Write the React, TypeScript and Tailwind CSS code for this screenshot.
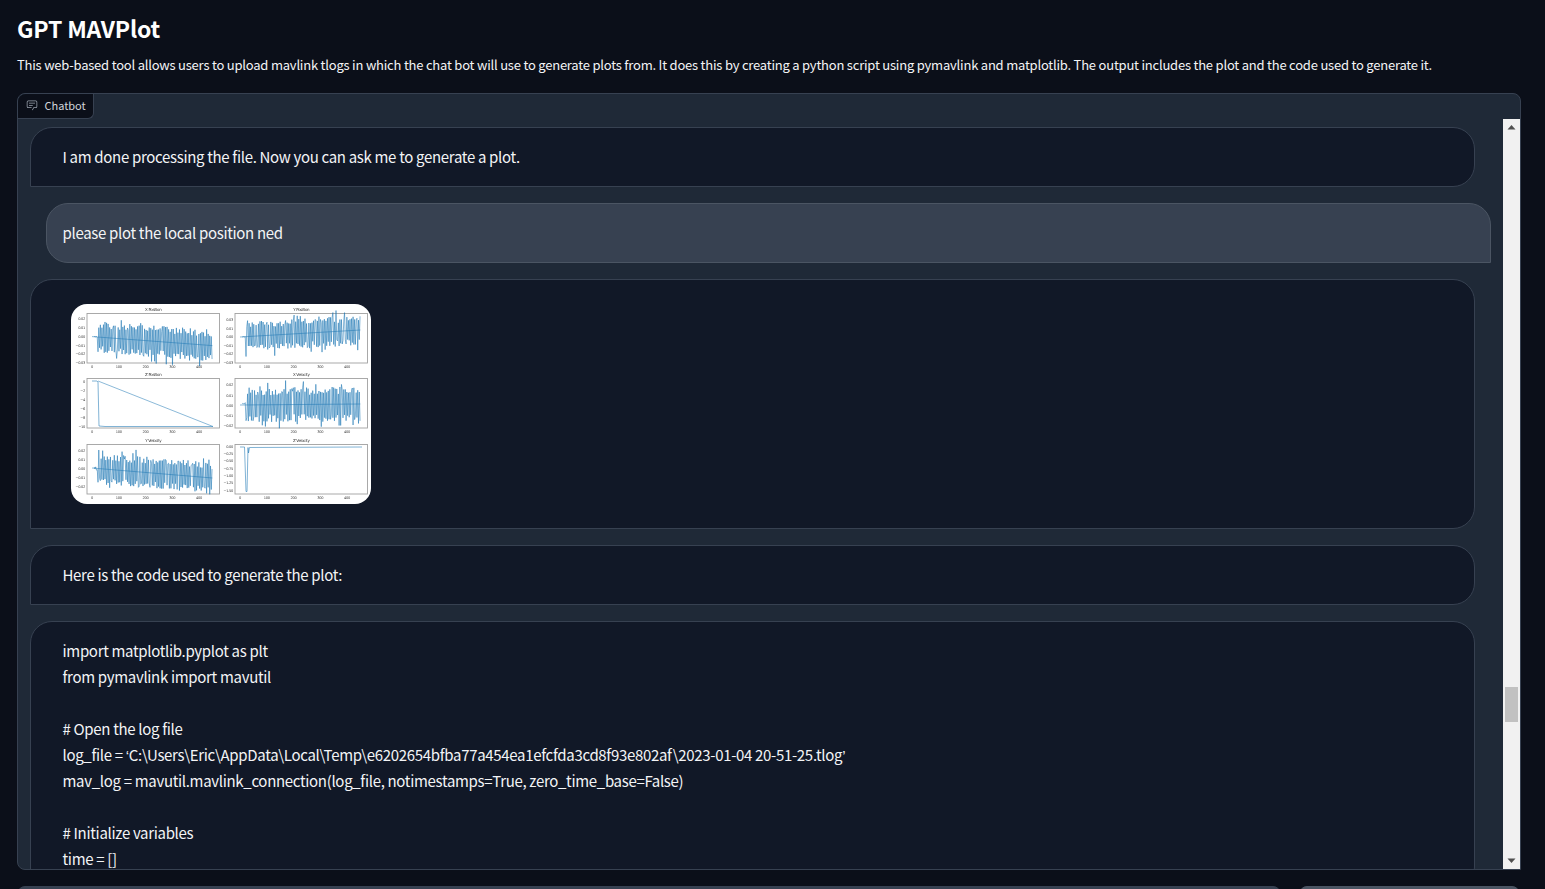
import React from "react";

function rng(seed: number) {
  let s = seed;
  return () => {
    s = (s * 1664525 + 1013904223) % 4294967296;
    return s / 4294967296;
  };
}

const BLUE = "#1f77b4";

type Plot = {
  title: string;
  x: number;
  y: number;
  ticks: { label: string; y: number }[];
  line: string[];
};

function noisy(seed: number, ax: number, zeroY: number, perUnit: number, amp: number, drift: number, startNoise: number) {
  const r = rng(seed);
  const x0 = ax + 5;
  const scale = 0.2675;
  const pts: string[] = [];
  let sign = 1;
  for (let t = 8; t <= 450; t += 2.9) {
    const px = x0 + t * scale;
    const trend = zeroY + (drift * t) / 450;
    let d = 0;
    if (t < 20) d = startNoise * (r() - 0.5);
    else {
      const m = 0.55 + r() * 0.45 + (r() > 0.88 ? 0.4 : 0);
      d = sign * amp * m * perUnit;
      sign = r() > 0.08 ? -sign : sign;
    }
    pts.push(`${px.toFixed(2)},${(trend + d).toFixed(2)}`);
  }
  return pts.join(" ");
}

function trendLine(ax: number, zeroY: number, drift: number) {
  return `${ax + 5},${zeroY} ${ax + 5 + 450 * 0.2675},${zeroY + drift}`;
}

const W = 132.5;
const H = 49.5;

const plots: Plot[] = [
  {
    title: "X Position",
    x: 16,
    y: 9.5,
    ticks: [
      { label: "0.02", y: 15 },
      { label: "0.01", y: 24 },
      { label: "0.00", y: 33 },
      { label: "−0.01", y: 41.5 },
      { label: "−0.02", y: 50 },
      { label: "−0.03", y: 59 },
    ],
    line: [noisy(11, 16, 32.6, 8.8, 1.8, 9, 1), trendLine(16, 32.6, 9)],
  },
  {
    title: "Y Position",
    x: 164,
    y: 9.5,
    ticks: [
      { label: "0.03", y: 16 },
      { label: "0.01", y: 24.5 },
      { label: "0.00", y: 33 },
      { label: "−0.01", y: 41.5 },
      { label: "−0.02", y: 50 },
      { label: "−0.03", y: 58.5 },
    ],
    line: [noisy(27, 164, 33, 8.4, 1.8, -7, 1), trendLine(164, 33, -7)],
  },
  {
    title: "Z Position",
    x: 16,
    y: 74.5,
    ticks: [
      { label: "0", y: 77.5 },
      { label: "−2", y: 87 },
      { label: "−4", y: 95.5 },
      { label: "−6", y: 105 },
      { label: "−8", y: 113.5 },
      { label: "−10", y: 122.5 },
    ],
    line: ["21,77 26,77 27,78 28,122 34,122.5 142,122.5", "27,77 142,122.5"],
  },
  {
    title: "X Velocity",
    x: 164,
    y: 74.5,
    ticks: [
      { label: "0.02", y: 81 },
      { label: "0.01", y: 91.5 },
      { label: "0.00", y: 101.5 },
      { label: "−0.01", y: 111.5 },
      { label: "−0.02", y: 121.5 },
    ],
    line: [noisy(43, 164, 101, 10, 1.75, -1, 5), trendLine(164, 101, -1)],
  },
  {
    title: "Y Velocity",
    x: 16,
    y: 140.5,
    ticks: [
      { label: "0.02", y: 146.5 },
      { label: "0.01", y: 155.5 },
      { label: "0.00", y: 164.5 },
      { label: "−0.01", y: 174 },
      { label: "−0.02", y: 183 },
    ],
    line: [noisy(59, 16, 164, 9.2, 1.7, 10, 5), trendLine(16, 164, 10)],
  },
  {
    title: "Z Velocity",
    x: 164,
    y: 140.5,
    ticks: [
      { label: "0.00", y: 142.5 },
      { label: "−0.25", y: 149.5 },
      { label: "−0.50", y: 157 },
      { label: "−0.75", y: 164.5 },
      { label: "−1.00", y: 172 },
      { label: "−1.25", y: 179 },
      { label: "−1.50", y: 187 },
    ],
    line: ["169,143 173.5,143 175,187.5 176,187.5 177,143.5 177.5,149 178.5,143.5 291,143"],
  },
];

function Axes({ p }: { p: Plot }) {
  const xTicks = [0, 100, 200, 300, 400];
  const x0 = p.x + 5;
  return (
    <g>
      <rect x={p.x} y={p.y} width={W} height={H} fill="#fff" stroke="#a0a0a0" strokeWidth="0.9" />
      <text x={p.x + W / 2} y={p.y - 2.2} fontSize="4" textAnchor="middle" fill="#333">
        {p.title}
      </text>
      {p.ticks.map((t) => (
        <text key={t.label} x={p.x - 2} y={t.y + 1.2} fontSize="3.6" textAnchor="end" fill="#444">
          {t.label}
        </text>
      ))}
      {xTicks.map((t) => (
        <text key={t} x={x0 + t * 0.2675} y={p.y + H + 5} fontSize="3.6" textAnchor="middle" fill="#444">
          {t}
        </text>
      ))}
      {p.line.map((pts, i) => (
        <polyline key={i} points={pts} fill="none" stroke={BLUE} strokeWidth={i === 1 ? 0.8 : 0.75} strokeOpacity={i === 1 ? 0.65 : 0.75} />
      ))}
    </g>
  );
}

function PlotImage() {
  return (
    <svg width="300" height="200" viewBox="0 0 300 200" className="block rounded-[16px] bg-white" fontFamily="'DejaVu Sans', sans-serif">
      <defs>
        <filter id="soft" x="0" y="0" width="1" height="1">
          <feGaussianBlur stdDeviation="0.28" />
        </filter>
      </defs>
      <g filter="url(#soft)">
        {plots.map((p) => (
          <Axes key={p.title} p={p} />
        ))}
      </g>
    </svg>
  );
}

function ChatIcon() {
  return (
    <svg width="12" height="12" viewBox="0 0 32 32" className="text-[#9ca3af]" fill="currentColor">
      <path d="M17.74 30L16 29l4-7h6a2 2 0 0 0 2-2V8a2 2 0 0 0-2-2H6a2 2 0 0 0-2 2v12a2 2 0 0 0 2 2h9v2H6a4 4 0 0 1-4-4V8a4 4 0 0 1 4-4h20a4 4 0 0 1 4 4v12a4 4 0 0 1-4 4h-4.84Z" />
      <path d="M8 10h16v2H8zm0 6h10v2H8z" />
    </svg>
  );
}

function Bot({ children, className = "" }: { children: React.ReactNode; className?: string }) {
  return (
    <div className={`w-[1445px] shrink-0 rounded-[22px] rounded-bl-none border border-[#374151] bg-[#111827] py-4 pr-8 pl-[31.5px] ${className}`}>
      {children}
    </div>
  );
}

function Q({ c }: { c: string }) {
  return <span className="font-['Liberation_Sans']">{c}</span>;
}

const code: React.ReactNode[] = [
  "import matplotlib.pyplot as plt",
  "from pymavlink import mavutil",
  "",
  "# Open the log file",
  <>
    log_file = <Q c="‘" />
    {"C:\\Users\\Eric\\AppData\\Local\\Temp\\e6202654bfba77a454ea1efcfda3cd8f93e802af\\2023-01-04 20-51-25.tlog"}
    <Q c="’" />
  </>,
  "mav_log = mavutil.mavlink_connection(log_file, notimestamps=True, zero_time_base=False)",
  "",
  "# Initialize variables",
  "time = []",
];

export default function App() {
  return (
    <div
      className="h-[889px] overflow-hidden bg-[#0b0f19] px-[17px] text-[#f3f4f6]"
      style={{ fontFamily: "'Noto Sans CJK SC', 'Noto Sans', sans-serif" }}
    >
      <h1 className="pt-[13px] text-[23px] leading-[30px] font-semibold tracking-[-0.2px] text-white">GPT MAVPlot</h1>
      <p className="mt-[8px] text-[13px] leading-[28px] tracking-[-0.215px] whitespace-nowrap text-[#f3f4f6]">
        This web-based tool allows users to upload mavlink tlogs in which the chat bot will use to generate plots from. It does this by creating a python script using pymavlink and matplotlib. The output includes the plot and the code used to generate it.
      </p>
      <section className="mt-[14px] flex h-[777px] w-[1504px] flex-col rounded-t-lg rounded-bl-lg border border-[#374151] bg-[#1f2937]">
        <div className="flex h-[25px] shrink-0">
          <div className="flex w-[76px] items-center gap-[6.5px] rounded-tl-lg rounded-br-md border-r border-b border-[#374151] bg-[#0b0f19] pb-[2px] pl-[8px] text-[11px] tracking-[-0.03px] text-[#d1d5db]">
            <ChatIcon />
            <span>Chatbot</span>
          </div>
        </div>
        <div className="flex min-h-0 flex-1">
          <div className="flex min-w-0 flex-1 flex-col gap-4 overflow-hidden px-3 pt-2 text-[15px] leading-[26px] tracking-[-0.32px]">
            <Bot>I am done processing the file. Now you can ask me to generate a plot.</Bot>
            <div className="ml-auto w-[1445px] shrink-0 rounded-[22px] rounded-br-none border border-[#4b5563] bg-[#374151] py-4 pr-4 pl-[15.5px]">
              please plot the local position ned
            </div>
            <Bot className="!py-6 !pl-8">
              <div className="pl-2">
                <PlotImage />
              </div>
            </Bot>
            <Bot>Here is the code used to generate the plot:</Bot>
            <Bot>
              {code.map((l, i) => (
                <div key={i} className="h-[26px] whitespace-pre">
                  {l}
                </div>
              ))}
            </Bot>
          </div>
          <div className="flex w-[17px] shrink-0 flex-col items-center bg-[#f1f1f1]">
            <svg width="9" height="17" viewBox="0 0 9 17" className="shrink-0">
              <path d="M4.5 6 L8.5 10.5 H0.5 Z" fill="#505050" />
            </svg>
            <div className="mt-[551px] h-[35px] w-[13px] shrink-0 bg-[#c1c1c1]" />
            <div className="flex-1" />
            <svg width="9" height="17" viewBox="0 0 9 17" className="shrink-0">
              <path d="M0.5 6.5 H8.5 L4.5 11 Z" fill="#505050" />
            </svg>
          </div>
        </div>
      </section>
      <div className="mt-[16px] flex gap-[18px]">
        <div className="h-[40px] w-[1264px] rounded-lg border border-[#374151] bg-[#374151]" />
        <div className="h-[40px] w-[221px] rounded-lg border border-[#4b5563] bg-[#4b5563]" />
      </div>
    </div>
  );
}
